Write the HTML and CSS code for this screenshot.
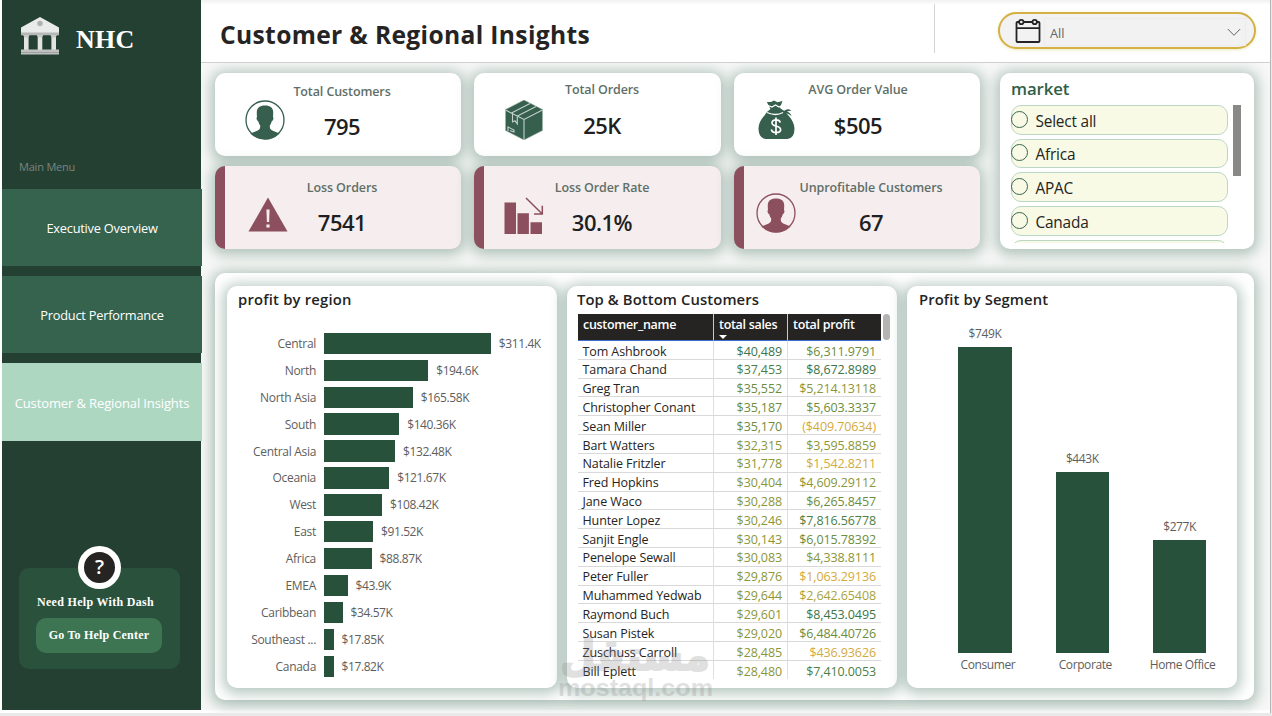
FILE: index.html
```html
<!DOCTYPE html>
<html lang="en">
<head>
<meta charset="utf-8">
<title>Customer &amp; Regional Insights</title>
<link rel="stylesheet" href="styles.css">
</head>
<body>
<div class="app">
  <aside class="sidebar">
    <div class="brand">
      <svg class="brand-logo" width="40" height="40" viewBox="0 0 40 40">
        <path d="M20 0 39 10.500v7H1v-7z" fill="#e9ebea"/>
        <path d="M1 15.500h38v2.800H1z" fill="#b5b8b6"/>
        <circle cx="20" cy="6.500" r="2.700" fill="#b0b2b1"/>
        <path d="M4 18h4.600v16H4zM17.700 18h4.600v16h-4.600zM31.400 18H36v16h-4.600z" fill="#e2e4e2"/>
        <path d="M3 18h6.600l-1.500 2.500H4.500zM16.700 18h6.600l-1.500 2.500h-3.600zM30.400 18H37l-1.500 2.500h-3.600z" fill="#c6c9c7"/>
        <path d="M1 32.500h38v5H1z" fill="#bfc2c0"/>
        <path d="M1 35.500h38" stroke="#9da19f"/>
      </svg>
      <span class="brand-name">NHC</span>
    </div>
    <div class="menu-label">Main Menu</div>
    <nav class="menu">
      <a class="menu-item">Executive Overview</a>
      <a class="menu-item">Product Performance</a>
      <a class="menu-item active">Customer &amp; Regional Insights</a>
    </nav>
    <section class="help">
      <div class="help-badge">?</div>
      <div class="help-text">Need Help With Dash</div>
      <button class="help-button">Go To Help Center</button>
    </section>
  </aside>

  <main class="main">
    <header class="header">
      <h1>Customer &amp; Regional Insights</h1>
      <div class="header-rule"></div>
      <div class="date-select">
        <svg class="cal" width="26" height="26" viewBox="0 0 26 26" fill="none" stroke="#252423" stroke-width="1.800">
          <path d="M4 4H2.400Q1.500 4 1.500 5v18q0 1 1 1h21q1 0 1-1V5q0-1-1-1H22M8.500 4h9M1.500 10.200h23"/>
          <circle cx="6.300" cy="4" r="2.200"/><circle cx="19.700" cy="4" r="2.200"/>
        </svg>
        <div class="date-box"><span>All</span>
          <svg width="14" height="9" viewBox="0 0 14 9" fill="none" stroke="#666"><path d="M.8 1 7 7.300 13.200 1"/></svg>
        </div>
      </div>
    </header>

    <section class="top">
      <div class="kpis">
        <article class="kpi first">
          <svg class="kpi-icon" width="40" height="40" viewBox="0 0 40 40"><use href="#person"/></svg>
          <div class="kpi-text"><h2>Total Customers</h2><strong>795</strong></div>
        </article>
        <article class="kpi">
          <svg class="kpi-icon" width="40" height="40" viewBox="0 0 40 40">
            <path d="M20 0 38.500 9.500v21L20 40 1.500 30.500v-21z" fill="#365f4e"/>
            <g fill="none" stroke="#c4d2cb" stroke-width="1.100">
              <path d="M1.500 10 20 19.500 38.500 10M20 19.500V40"/>
              <path d="M7.500 12.900 26 3.500M13.500 16 32 6.600M8.500 14v8l2.500-1.200 2.300 3V16.500"/>
              <path d="M4 31v-4l6 3v2l-4-1.500"/>
            </g>
            <path d="M20 0 38.500 9.500v21L20 40 1.500 30.500v-21z" fill="none" stroke="#9fb5aa" stroke-width=".6"/>
          </svg>
          <div class="kpi-text"><h2>Total Orders</h2><strong>25K</strong></div>
        </article>
        <article class="kpi third">
          <svg class="kpi-icon" width="40" height="40" viewBox="0 0 40 40">
            <g fill="#365f4e">
              <path d="M10.500 1.800 15 2l3-1.500 3.500 1.800 5-1.300-2.600 7q4.800 2.500 8.600 7.500 6 7 6 13 0 9.500-7 10.500H9.500q-7-1-7-10.500 0-6.500 6-13 3-4.700 6-6.500-2.500-4.500-4-7.700z"/>
              <path d="M27 12q3.500-4.500 8.500-1.500-3 .3-4.500 1 3.500 1 4.500 4.500-3.500-3.500-8-2.500z"/>
            </g>
            <path d="M12 5.500 16 7l3.500-2 3.500 2 3-1.500M11 12.500q9 4 16 0" fill="none" stroke="#fff" stroke-width="1.300"/>
            <path d="M24.300 22.500q-.6-2.700-4.300-2.700t-4 2.900q0 2.300 4 3.300 4.600 1 4.600 3.700T20 32.500q-4.200 0-4.600-3.200M20 17.500v17.500" fill="none" stroke="#fff" stroke-width="1.700"/>
          </svg>
          <div class="kpi-text"><h2>AVG Order Value</h2><strong>$505</strong></div>
        </article>
        <article class="kpi loss">
          <svg class="kpi-icon" width="40" height="40" viewBox="0 0 40 40">
            <path d="M20 1.500 39.500 35.500H.5z" fill="#8c4f5e"/>
            <path d="M18.400 13.500h3.200l-.5 12.500h-2.200zM18.400 28.500h3.200v3h-3.200z" fill="#f8eded"/>
          </svg>
          <div class="kpi-text"><h2>Loss Orders</h2><strong>7541</strong></div>
        </article>
        <article class="kpi loss rate">
          <svg class="kpi-icon" width="40" height="40" viewBox="0 0 40 40">
            <path d="M.5 6.500H12V38H.5zM13.500 17.300h11.400V38H13.500zM26.500 26.300H38V38H26.500z" fill="#8c4f5e"/>
            <path d="M22 2 38 17.800M30 18h8.300V9.800" fill="none" stroke="#8c4f5e" stroke-width="1.500"/>
          </svg>
          <div class="kpi-text"><h2>Loss Order Rate</h2><strong>30.1%</strong></div>
        </article>
        <article class="kpi loss unprofitable">
          <svg class="kpi-icon" width="40" height="40" viewBox="0 0 40 40"><use href="#person"/></svg>
          <div class="kpi-text"><h2>Unprofitable Customers</h2><strong>67</strong></div>
        </article>
      </div>
      <section class="market">
        <h2>market</h2>
        <div class="market-body">
          <ul class="options">
            <li><i></i>Select all</li>
            <li><i></i>Africa</li>
            <li><i></i>APAC</li>
            <li><i></i>Canada</li>
            <li></li>
          </ul>
          <div class="market-scroll"></div>
        </div>
      </section>
    </section>

    <section class="board">
      <article class="panel regions">
        <h2>profit by region</h2>
        <div class="hbars">
          <div class="hbar"><span>Central</span><b style="width:166.8px"></b><em>$311.4K</em></div>
          <div class="hbar"><span>North</span><b style="width:104.2px"></b><em>$194.6K</em></div>
          <div class="hbar"><span>North Asia</span><b style="width:88.7px"></b><em>$165.58K</em></div>
          <div class="hbar"><span>South</span><b style="width:75.2px"></b><em>$140.36K</em></div>
          <div class="hbar"><span>Central Asia</span><b style="width:71px"></b><em>$132.48K</em></div>
          <div class="hbar"><span>Oceania</span><b style="width:65.2px"></b><em>$121.67K</em></div>
          <div class="hbar"><span>West</span><b style="width:58.1px"></b><em>$108.42K</em></div>
          <div class="hbar"><span>East</span><b style="width:49px"></b><em>$91.52K</em></div>
          <div class="hbar"><span>Africa</span><b style="width:47.6px"></b><em>$88.87K</em></div>
          <div class="hbar"><span>EMEA</span><b style="width:23.5px"></b><em>$43.9K</em></div>
          <div class="hbar"><span>Caribbean</span><b style="width:18.5px"></b><em>$34.57K</em></div>
          <div class="hbar"><span>Southeast ...</span><b style="width:9.6px"></b><em>$17.85K</em></div>
          <div class="hbar"><span>Canada</span><b style="width:9.5px"></b><em>$17.82K</em></div>
        </div>
      </article>

      <article class="panel customers">
        <h2>Top &amp; Bottom Customers</h2>
        <div class="table-wrap">
          <div class="table-clip">
          <table>
            <thead><tr><th>customer_name</th><th class="sorted">total sales</th><th>total profit</th></tr></thead>
            <tbody>
              <tr><td>Tom Ashbrook</td><td class="g5">$40,489</td><td class="g3">$6,311.9791</td></tr>
              <tr><td>Tamara Chand</td><td class="g4">$37,453</td><td class="g5">$8,672.8989</td></tr>
              <tr><td>Greg Tran</td><td class="g3">$35,552</td><td class="g2">$5,214.13118</td></tr>
              <tr><td>Christopher Conant</td><td class="g3">$35,187</td><td class="g3">$5,603.3337</td></tr>
              <tr><td>Sean Miller</td><td class="g3">$35,170</td><td class="g0">($409.70634)</td></tr>
              <tr><td>Bart Watters</td><td class="g2">$32,315</td><td class="g2">$3,595.8859</td></tr>
              <tr><td>Natalie Fritzler</td><td class="g2">$31,778</td><td class="g0">$1,542.8211</td></tr>
              <tr><td>Fred Hopkins</td><td class="g2">$30,404</td><td class="g2">$4,609.29112</td></tr>
              <tr><td>Jane Waco</td><td class="g2">$30,288</td><td class="g3">$6,265.8457</td></tr>
              <tr><td>Hunter Lopez</td><td class="g2">$30,246</td><td class="g4">$7,816.56778</td></tr>
              <tr><td>Sanjit Engle</td><td class="g2">$30,143</td><td class="g3">$6,015.78392</td></tr>
              <tr><td>Penelope Sewall</td><td class="g2">$30,083</td><td class="g2">$4,338.8111</td></tr>
              <tr><td>Peter Fuller</td><td class="g2">$29,876</td><td class="g0">$1,063.29136</td></tr>
              <tr><td>Muhammed Yedwab</td><td class="g2">$29,644</td><td class="g1">$2,642.65408</td></tr>
              <tr><td>Raymond Buch</td><td class="g2">$29,601</td><td class="g5">$8,453.0495</td></tr>
              <tr><td>Susan Pistek</td><td class="g2">$29,020</td><td class="g3">$6,484.40726</td></tr>
              <tr><td>Zuschuss Carroll</td><td class="g2">$28,485</td><td class="g0">$436.93626</td></tr>
              <tr><td>Bill Eplett</td><td class="g2">$28,480</td><td class="g4">$7,410.0053</td></tr>
            </tbody>
          </table>
          </div>
          <div class="table-scroll"></div>
        </div>
      </article>

      <article class="panel segments">
        <h2>Profit by Segment</h2>
        <div class="columns">
          <div class="column"><em>$749K</em><b style="height:306px"></b><span>Consumer</span></div>
          <div class="column"><em>$443K</em><b style="height:181px"></b><span>Corporate</span></div>
          <div class="column"><em>$277K</em><b style="height:113px"></b><span>Home Office</span></div>
        </div>
      </article>
    </section>
  </main>

  <svg class="watermark" width="170" height="80" viewBox="0 0 170 80">
    <text class="wm-ar" x="83" y="38" text-anchor="middle" textLength="150" lengthAdjust="spacingAndGlyphs">مستقل</text>
    <text class="wm-en" x="6" y="64" textLength="155" lengthAdjust="spacingAndGlyphs">mostaql.com</text>
  </svg>
</div>

<svg class="defs" width="0" height="0">
  <defs>
    <symbol id="person" viewBox="0 0 40 40">
      <circle cx="20" cy="20" r="19" fill="none" stroke="currentColor" stroke-width="1.300"/>
      <path d="M20 5.500c5.500 0 8.400 2.500 8.200 7.500 0 2-.1 3-.2 4 1 1 .2 4-1.200 4.300-.6 2-1.200 3.200-2 4.200 0 3 .3 4 3 5.200l6.900 2.700Q28 39.300 20 39.300T5.300 33.400l6.900-2.700c2.700-1.200 3-2.200 3-5.200-.8-1-1.400-2.200-2-4.200-1.400-.3-2.200-3.300-1.200-4.300-.1-1-.2-2-.2-4-.2-5 2.700-7.500 8.200-7.500z" fill="currentColor"/>
    </symbol>
  </defs>
</svg>
</body>
</html>
```
FILE: styles.css
```css
* { box-sizing: border-box; }

body {
  margin: 0;
  background: #e9e9e9;
  font-family: "Open Sans", "Noto Sans", sans-serif;
  color: #252423;
}

h1, h2, ul { margin: 0; padding: 0; }
em { font-style: normal; }
.defs { position: absolute; }

.app {
  position: relative;
  display: flex;
  width: 1271px;
  height: 713px;
  padding: 0 1px 3px 2px;
  background: #fff;
  border-right: 1px solid #b5b5b5;
  overflow: hidden;
}

/* Sidebar */
.sidebar {
  position: relative;
  z-index: 1;
  display: flex;
  flex-direction: column;
  flex: none;
  width: 199px;
  height: 710px;
  background: #244033;
}

.brand { display: flex; align-items: center; height: 56px; padding: 18px 0 0 18px; }
.brand-name {
  margin: 5px 0 0 16px;
  color: #fff;
  font: bold 26px/30px "Liberation Serif", serif;
  letter-spacing: .3px;
}

.menu-label { margin: 103px 0 0 17px; color: #7b857f; font-size: 11px; line-height: 16px; height: 30px; letter-spacing: -.2px; }

.menu { display: flex; flex-direction: column; gap: 10px; width: 200px; }
.menu-item {
  display: flex;
  align-items: center;
  justify-content: center;
  height: 77px;
  padding-top: 0;
  background: #36634e;
  color: #fff;
  font-size: 12.8px;
  font-weight: 500;
  letter-spacing: -.22px;
  white-space: nowrap;
}
.menu-item.active { height: 78px; padding-top: 1px; background: #aed7c2; font-size: 13px; letter-spacing: -.12px; }

.help {
  display: flex;
  flex-direction: column;
  align-items: center;
  width: 161px;
  height: 101px;
  margin: 127px 0 0 17px;
  border-radius: 10px;
  background: #2a513c;
  color: #fff;
  font-family: "Liberation Serif", serif;
  font-weight: bold;
}
.help-badge {
  flex: none;
  width: 43px;
  height: 43px;
  margin-top: -22px;
  border: 6px solid #fff;
  border-radius: 50%;
  background: #252423;
  font: 600 20px/30px "Open Sans", sans-serif;
  text-align: center;
}
.help-text { margin: 4px 8px 0 0; font-size: 12px; line-height: 18px; letter-spacing: .3px; }
.help-button {
  width: 126px;
  height: 35px;
  margin: 7px 1px 0 0;
  padding: 0 0 1px;
  border: 0;
  border-radius: 10px;
  background: #3d7553;
  color: #fff;
  font: bold 12px "Liberation Serif", serif;
  letter-spacing: .2px;
}

/* Main area */
.main { flex: 1; background: #f7f8f7; }

.header {
  position: relative;
  display: flex;
  height: 63px;
  padding-right: 14px;
  border-bottom: 1px solid #cfcfcf;
  background: linear-gradient(#f1f1f1, #fff 5px);
}
h1 { width: 733px; padding: 18px 0 0 19px; font-size: 24.6px; line-height: 34px; font-weight: 700; letter-spacing: .35px; }
.header-rule { width: 1px; height: 49px; margin: 4px 63px 0 0; background: #d4d4d4; }
.date-select {
  display: flex;
  width: 258px;
  height: 37px;
  margin-top: 12px;
  padding: 4px 8px 0 15px;
  border: 2px solid #d4b045;
  border-radius: 19px;
  background: #f2f2f2;
  box-shadow: 0 1px 3px rgba(222, 218, 120, .5);
}
.cal { flex: none; margin-top: 0; }
.date-box {
  display: flex;
  justify-content: space-between;
  align-items: center;
  flex: 1;
  height: 28px;
  margin-left: 3px;
  padding: 1px 4px 0 5px;
  border: 1px solid #ececec;
  color: #666;
  font-size: 12.8px;
}

.top { display: flex; gap: 20px; padding: 10px 16px 0 14px; }
.kpis {
  display: grid;
  grid-template-columns: 246px 247px 246px;
  grid-template-rows: 83px 83px;
  column-gap: 13px;
  row-gap: 10px;
  flex: none;
  width: 765px;
}
.kpi, .market, .board, .panel {
  border-radius: 10px;
  background: #fff;
  box-shadow: 0 2px 13px 4px rgba(48, 96, 78, .35);
}
.kpi { display: grid; grid-template-columns: 48px 100px; column-gap: 0; padding-left: 30px; color: #365f4e; }
.kpi-icon { margin-top: 27px; }
.kpi-text { display: flex; flex-direction: column; align-items: center; padding-top: 7px; white-space: nowrap; }
.kpi h2 { font-size: 12.5px; line-height: 20px; font-weight: 600; color: #5f6f68; letter-spacing: -.1px; }
.kpi strong { margin-top: 10px; font-size: 22px; line-height: 30px; font-weight: 600; color: #1f1f1f; letter-spacing: -.5px; }
.kpi.first { grid-template-columns: 47px 100px; }
.kpi.first .kpi-text { padding-top: 9px; }
.kpi.first strong { margin-top: 9px; }
.kpi.third { padding-left: 22px; grid-template-columns: 52px 100px; }
.kpi.loss { border-left: 10px solid #8c4f5e; padding-left: 23px; background: #f5edee; color: #8c4f5e; grid-template-columns: 44px 100px; }
.kpi.loss .kpi-icon { margin-top: 30px; }
.kpi.loss .kpi-text { padding-top: 12px; }
.kpi.loss strong { margin-top: 9px; }
.kpi.rate { padding-left: 20px; grid-template-columns: 48px 100px; }
.kpi.unprofitable { padding-left: 12px; grid-template-columns: 56px 118px; }
.kpi.unprofitable .kpi-icon { margin-top: 27px; }

.market { flex: none; width: 254px; height: 176px; padding: 5px 13px 0 11px; }
.market h2 { color: #2f5f48; font-size: 16.800px; line-height: 22px; font-weight: 600; letter-spacing: -.1px; }
.market-body { display: flex; justify-content: space-between; height: 138px; margin-top: 5px; overflow: hidden; }
.options { list-style: none; width: 217px; }
.options li {
  display: flex;
  align-items: center;
  height: 29.6px;
  margin-bottom: 4.1px;
  padding-top: 3px;
  border: 1px solid #bcd6c6;
  border-radius: 10px;
  background: #f8fae5;
  font-size: 15.4px;
  letter-spacing: -.2px;
}
.options i { width: 17px; height: 17px; margin: -4px 7.500px 0 -1px; border: 1.4px solid #3a6650; border-radius: 50%; }
.market-scroll { width: 8px; height: 71px; background: #888886; }

/* Charts and table */
.board {
  display: flex;
  gap: 10px;
  width: 1039px;
  height: 427px;
  margin: 24px 0 0 14px;
  padding: 13px 0 0 12px;
}
.panel { flex: none; width: 330px; height: 402px; padding: 2px 0 0 12px; }
.panel h2 { font-size: 14.800px; line-height: 22px; margin-bottom: 1px; font-weight: 600; letter-spacing: .1px; }
.regions h2 { margin-left: -1px; letter-spacing: .2px; }

.hbars { margin-top: 19px; font-size: 12px; color: #605e5c; letter-spacing: -.4px; }
.regions h2 + .hbars { margin-top: 20px; }
.hbar { display: grid; grid-template-columns: 77px auto 1fr; column-gap: 8.300px; align-items: center; height: 26.920px; white-space: nowrap; }
.hbar span { text-align: right; letter-spacing: -.3px; }
.hbar b { height: 21.400px; background: #27513b; }
.hbar em { margin-left: -.6px; }

.customers { padding-left: 11px; }
.customers h2 { margin-left: -1px; }
.table-wrap { display: flex; gap: 2px; margin-top: 4px; }
.table-clip { width: 303px; height: 365px; overflow: hidden; }
table { width: 303px; table-layout: fixed; border-collapse: separate; border-spacing: 0; font-size: 12.500px; letter-spacing: -.1px; }
th {
  position: relative;
  height: 27px;
  padding: 0 5px 5px;
  border-bottom: 1px solid #3b6fc9;
  background: #252423;
  color: #fff;
  font-weight: 600;
  font-size: 12.500px;
  line-height: 18px;
  letter-spacing: -.3px;
  text-align: left;
}
th:nth-child(1) { width: 135px; }
th:nth-child(2) { width: 74px; }
th + th { border-left: 1px solid #c9c9c9; }
.sorted::after {
  content: "";
  position: absolute;
  left: 5px;
  bottom: 1px;
  border: 4.500px solid transparent;
  border-top-color: #fff;
  border-bottom: 0;
}
td { height: 18.820px; padding: 3.500px 5px 0; border-bottom: 1px solid #d9d9d9; line-height: 14.300px; white-space: nowrap; }
tr:last-child td { border-bottom: 0; }
td:first-child { padding-left: 4.500px; }
td + td { border-left: 1px solid #dedede; text-align: right; }
.g0 { color: #d3aa3c; }
.g1 { color: #a9a43a; }
.g2 { color: #8b9637; }
.g3 { color: #6d8c3c; }
.g4 { color: #4d8045; }
.g5 { color: #3b7549; }
.table-scroll { width: 7px; height: 26px; border-radius: 4px; background: #b4b4b2; }

.columns { display: flex; align-items: flex-end; gap: 17.300px; height: 364px; margin: 0 0 0 26px; font-size: 12px; line-height: 16px; color: #605e5c; letter-spacing: -.4px; }
.column { display: flex; flex-direction: column; align-items: center; width: 80px; }
.column em { margin-bottom: 5px; }
.column b { width: 53.500px; background: #27513b; }
.column span { margin: 4px -6px 2px 0; white-space: nowrap; }

.watermark { position: absolute; left: 552px; top: 632px; z-index: 2; fill: #888; opacity: .25; }
.wm-ar { font: bold 42px "DejaVu Sans", sans-serif; stroke: #888; stroke-width: 2px; }
.wm-en { font: bold 24px "Liberation Sans", sans-serif; }
```
